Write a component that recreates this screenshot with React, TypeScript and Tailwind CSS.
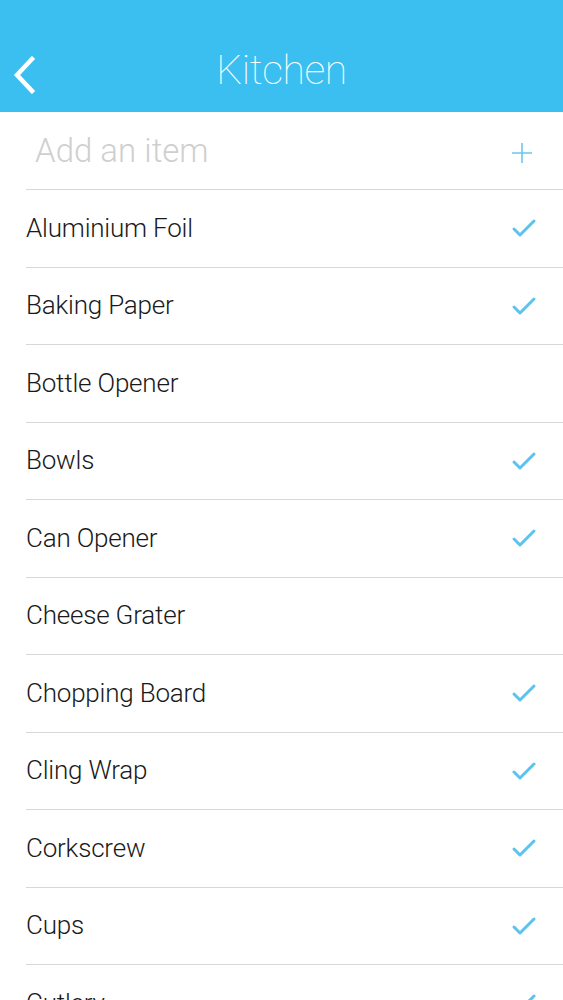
import React from "react";

const items: { name: string; checked: boolean }[] = [
  { name: "Aluminium Foil", checked: true },
  { name: "Baking Paper", checked: true },
  { name: "Bottle Opener", checked: false },
  { name: "Bowls", checked: true },
  { name: "Can Opener", checked: true },
  { name: "Cheese Grater", checked: false },
  { name: "Chopping Board", checked: true },
  { name: "Cling Wrap", checked: true },
  { name: "Corkscrew", checked: true },
  { name: "Cups", checked: true },
  { name: "Cutlery", checked: true },
];

const Check = () => (
  <svg width="26" height="20" viewBox="0 0 26 20" fill="none">
    <path d="M3 11 L9 17 L23 3" stroke="#5cc2ee" strokeWidth="3" strokeLinecap="round" strokeLinejoin="round" />
  </svg>
);

export default function App() {
  return (
    <div className="w-[563px] h-[1000px] overflow-hidden bg-white" style={{ fontFamily: '"Helvetica Neue", Roboto, Inter, sans-serif' }}>
      <div className="h-[112px] bg-[#3bbff0] relative flex items-end">
        <div className="h-[72px] w-full flex items-center justify-center relative">
          <svg className="absolute left-[12px] top-[16px]" width="26" height="38" viewBox="0 0 26 38" fill="none">
            <path d="M20 3 L5 19 L20 35" stroke="white" strokeWidth="4.5" strokeLinecap="square" />
          </svg>
          <span className="text-white text-[41px] font-thin tracking-[-0.5px] leading-none -mt-[12px]">Kitchen</span>
        </div>
      </div>
      <div className="h-[78px] ml-[26px] border-b border-[#d8d8d8] flex items-center justify-between pr-[30px]">
        <span className="text-[#cfcfcf] text-[33px] font-light pl-[9px]">Add an item</span>
        <svg width="22" height="22" viewBox="0 0 22 22" className="mt-[4px]">
          <path d="M11 1 V21 M1 11 H21" stroke="#6cc6ef" strokeWidth="1.6" />
        </svg>
      </div>
      {items.map((it) => (
        <div key={it.name} className="h-[77.5px] ml-[26px] border-b border-[#d8d8d8] flex items-center justify-between pr-[26px]">
          <span className="text-[#1a1a1a] text-[26px] font-light tracking-[-0.2px]">{it.name}</span>
          {it.checked && <Check />}
        </div>
      ))}
    </div>
  );
}
